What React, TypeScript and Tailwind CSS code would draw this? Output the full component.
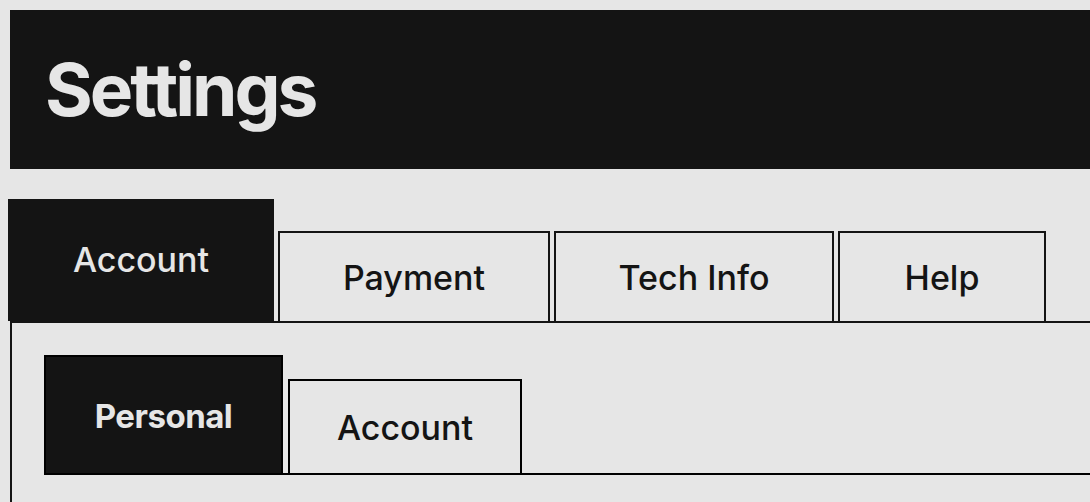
import { useState } from 'react';

const mainTabs = [
  { label: 'Account', width: 'w-[266px]' },
  { label: 'Payment', width: 'w-[272px]' },
  { label: 'Tech Info', width: 'w-[280px]' },
  { label: 'Help', width: 'w-[208px]' },
];

const subTabs = [
  { label: 'Personal', width: 'w-[239px]' },
  { label: 'Account', width: 'w-[234px]' },
];

export default function App() {
  const [tab, setTab] = useState(0);
  const [sub, setSub] = useState(0);

  return (
    <div
      className="min-h-screen bg-[#e6e6e6] pt-[10px] overflow-hidden"
      style={{ fontFamily: 'Inter, "Noto Sans", sans-serif' }}
    >
      <header className="ml-[10px] h-[159px] bg-[#141414] flex items-center pl-[35px]">
        <h1 className="text-[73px] font-bold leading-none tracking-[-3px] text-[#e6e6e6]">Settings</h1>
      </header>

      <div className="mt-[30px] pl-[8px] flex items-end gap-[4px]">
        {mainTabs.map((t, i) =>
          i === tab ? (
            <button
              key={t.label}
              onClick={() => setTab(i)}
              className={`${t.width} h-[122px] bg-[#141414] text-[#e6e6e6] text-[34px] font-medium leading-none flex items-center justify-center`}
            >
              {t.label}
            </button>
          ) : (
            <button
              key={t.label}
              onClick={() => setTab(i)}
              className={`${t.width} h-[90px] border-2 border-b-0 border-[#141414] text-[#141414] text-[34px] font-medium leading-none flex items-center justify-center pt-[2px]`}
            >
              {t.label}
            </button>
          )
        )}
      </div>

      {/* panel: padded on the left and top only, so the sub-tab rule runs to the edge */}
      <div className="ml-[10px] border-l-2 border-t-2 border-[#141414] pl-[32px] pt-[32px] pb-[32px] min-h-[200px]">
        <div className="flex items-end gap-[5px] border-b-2 border-black">
          {subTabs.map((t, i) =>
            i === sub ? (
              <button
                key={t.label}
                onClick={() => setSub(i)}
                className={`${t.width} h-[118px] border-2 border-b-0 border-black bg-[#141414] text-[#e6e6e6] text-[33px] font-bold tracking-[-0.5px] leading-none flex items-center justify-center pt-[2px]`}
              >
                {t.label}
              </button>
            ) : (
              <button
                key={t.label}
                onClick={() => setSub(i)}
                className={`${t.width} h-[94px] border-2 border-b-0 border-black text-[#141414] text-[34px] font-medium leading-none flex items-center justify-center pt-[2px]`}
              >
                {t.label}
              </button>
            )
          )}
        </div>
      </div>
    </div>
  );
}
